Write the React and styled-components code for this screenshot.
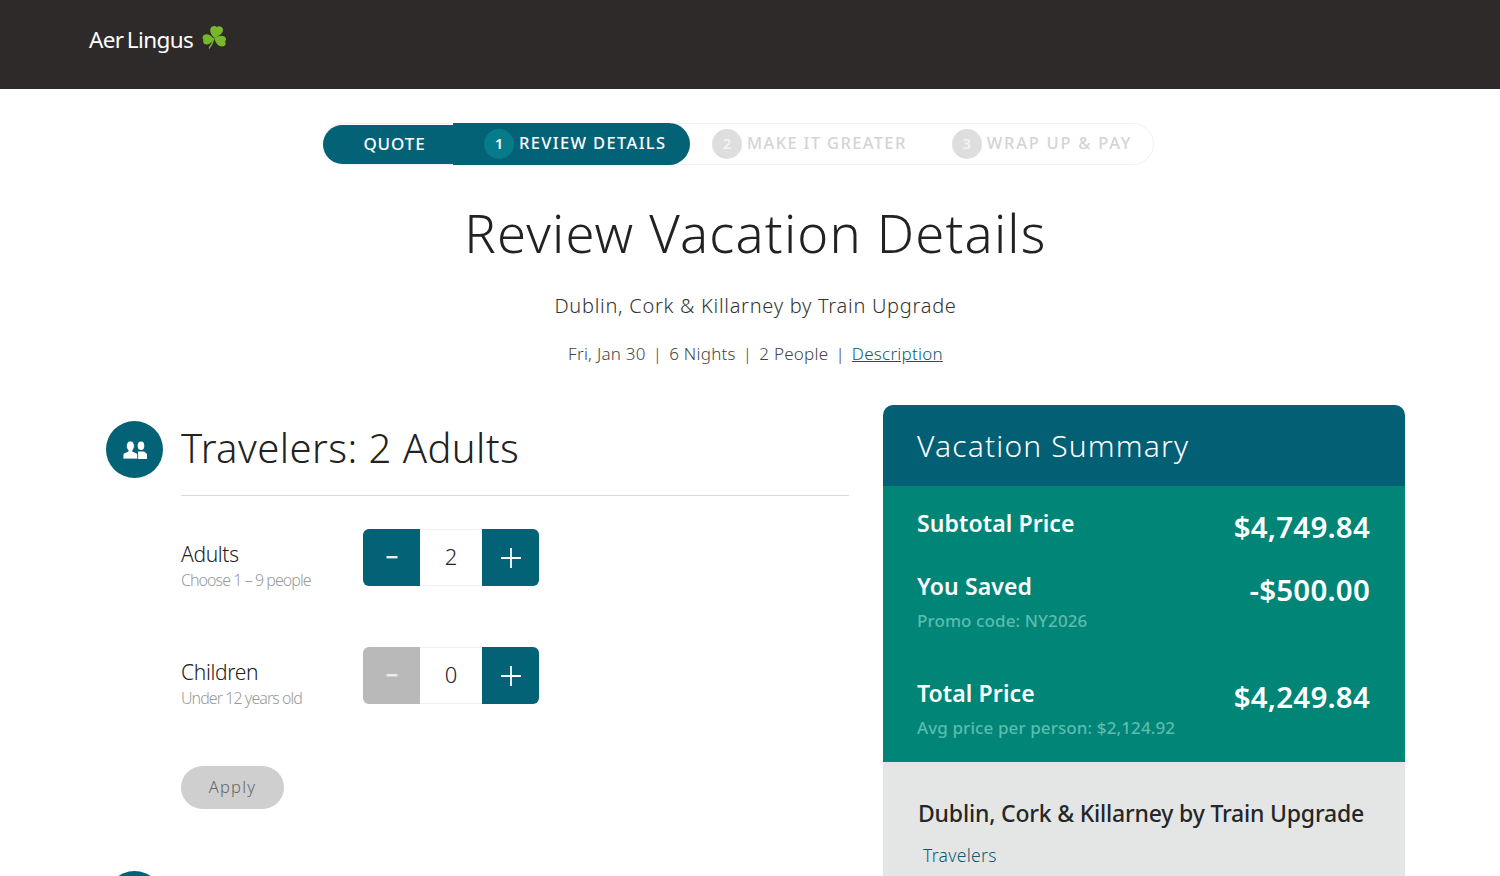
import React from "react";
import styled, { createGlobalStyle } from "styled-components";

const TEAL = "#036275";

const Global = createGlobalStyle`
  html, body { margin: 0; padding: 0; height: 876px; overflow: hidden; background: #fff; }
  body { font-family: "Noto Sans", "Open Sans", "Liberation Sans", sans-serif; color: #2b2b2b; }
  #root { height: 876px; overflow: hidden; }
  * { box-sizing: border-box; }
`;
const Header = styled.header`
  height: 89px; background: #2e2a2a; display: flex; align-items: flex-start; padding: 25px 0 0 89px; gap: 7px;
`;
const Brand = styled.span`
  color: #fff; font-size: 22.5px; line-height: 30px; font-weight: 400; letter-spacing: -0.6px; word-spacing: -2px;
`;
const StepperWrap = styled.nav`
  display: flex; padding: 34px 0 0 323px;
`;
const Stepper = styled.div`
  width: 831px; height: 42px; border: 1px solid #f1f1f1; border-radius: 21px; display: flex; align-items: center;
`;
const QuoteStep = styled.div`
  width: 130px; height: 39px; margin-left: -1px; background: ${TEAL}; color: #fff; border-radius: 20px 0 0 20px;
  display: flex; align-items: center; justify-content: center; font-size: 17px; font-weight: 500; letter-spacing: 0.9px; padding: 0 0 2px 13px;
`;
const ActiveStep = styled.div`
  width: 237px; height: 42px; background: ${TEAL}; color: #fff; border-radius: 0 21px 21px 0;
  display: flex; align-items: center; gap: 5px; padding-left: 31px; font-size: 16.5px; font-weight: 500; letter-spacing: 1.35px;
`;
const Step = styled.div`
  display: flex; align-items: center; gap: 5px; margin-left: ${p => p.$ml}px; color: #d4d4d4; font-size: 16.5px; font-weight: 500; letter-spacing: ${p => p.$ls}px;
`;
const StepLabel = styled.span`
  margin-top: -3px;
`;
const StepNum = styled.span`
  width: 30px; height: 30px; border-radius: 50%; flex: none; display: flex; align-items: center; justify-content: center; padding-bottom: 2px;
  background: ${p => p.$active ? "#057b8c" : "#dedede"}; color: ${p => p.$active ? "#fff" : "#f4f4f4"}; font-size: 15px; font-weight: 600; letter-spacing: 0;
`;
const Intro = styled.div`
  text-align: center; padding-left: 11px;
`;
const Title = styled.h1`
  margin: 0; padding-top: 33px; font-size: 52.5px; line-height: 70px; font-weight: 300; letter-spacing: 1.2px; color: #222;
`;
const Sub = styled.p`
  margin: 24px 0 0; font-size: 20px; line-height: 28px; font-weight: 300; letter-spacing: 0.72px; color: #333;
`;
const Meta = styled.p`
  margin: 22px 0 0; font-size: 17px; line-height: 24px; font-weight: 300; letter-spacing: 0.25px; color: #444;
  a { color: #0b5a70; text-decoration: underline; }
  i { font-style: normal; margin: 0 7px; }
`;
const Main = styled.main`
  display: grid; grid-template-columns: 743px 522px; column-gap: 34px; padding: 39px 0 0 106px;
`;
const Left = styled.section`
  padding-top: 16px;
`;
const SectionHead = styled.div`
  display: flex; align-items: center; gap: 18px; height: 57px;
`;
const Circle = styled.div`
  width: 57px; height: 57px; flex: none; border-radius: 50%; background: ${TEAL}; display: flex; align-items: center; justify-content: center;
`;
const SectionTitle = styled.h2`
  margin: 0 0 4px; font-size: 40px; line-height: 57px; font-weight: 300; letter-spacing: 0.45px; color: #222;
`;
const Body = styled.div`
  margin: 17px 0 0 75px; border-top: 1px solid #dcdcdc; padding-top: 33px; display: flex; flex-direction: column;
`;
const Row = styled.div`
  display: flex; align-items: center; height: 57px; margin-bottom: 61px;
`;
const RowText = styled.div`
  width: 182px; padding-top: 18px;
`;
const RowLabel = styled.div`
  font-size: 21px; line-height: 26px; font-weight: 300; letter-spacing: -0.35px; color: #222;
`;
const RowHint = styled.div`
  font-size: 16px; line-height: 26px; font-weight: 300; letter-spacing: -0.95px; color: #999;
`;
const Counter = styled.div`
  display: flex; width: 176px; height: 57px; border-radius: 6px; overflow: hidden;
`;
const CounterBtn = styled.button`
  width: 57px; height: 57px; border: 0; padding: 0; background: ${p => p.$off ? "#b9b9b9" : TEAL}; color: #fff;
  display: flex; align-items: center; justify-content: center;
`;
const CounterValue = styled.div`
  flex: 1; border-top: 1px solid #f1f1f1; border-bottom: 1px solid #f1f1f1; display: flex; align-items: center; justify-content: center;
  font-size: 22px; font-weight: 300; color: #222; padding-bottom: 3px;
`;
const Apply = styled.button`
  width: 103px; height: 43px; margin-top: 1px; border: 0; border-radius: 22px; background: #cfcfcf; color: #666;
  font: 300 16.5px "Noto Sans", sans-serif; letter-spacing: 1.2px; padding: 0 0 2px;
`;
const NextCircle = styled(Circle)`
  margin: 62px 0 0;
`;
const Summary = styled.aside``;
const SummaryHead = styled.div`
  height: 81px; background: #025f74; border-radius: 10px 10px 0 0; padding: 0 34px 1px; display: flex; align-items: center;
  color: #fff; font-size: 30px; font-weight: 300; letter-spacing: 1.15px;
`;
const Prices = styled.div`
  height: 276px; background: #008577; padding: 23px 35px 0 34px; color: #fff; display: flex; flex-direction: column;
`;
const PriceRow = styled.div`
  display: flex; justify-content: space-between; align-items: flex-start; height: ${p => p.$h}px;
`;
const PriceLabel = styled.div`
  font-size: 23px; line-height: 28px; font-weight: 600; letter-spacing: 0.1px;
`;
const PriceNote = styled.div`
  margin-top: 9px; font-size: 17px; line-height: 24px; font-weight: 500; letter-spacing: 0.1px; color: #5cbcae;
`;
const PriceValue = styled.div`
  font-size: 29.5px; line-height: 36px; font-weight: 600; letter-spacing: 0.2px;
`;
const Package = styled.div`
  height: 114px; background: #e4e6e6; padding: 36px 35px 0;
`;
const PackageTitle = styled.div`
  font-size: 23px; line-height: 30px; font-weight: 500; letter-spacing: -0.2px; color: #262626; white-space: nowrap;
`;
const PackageLink = styled.div`
  margin: 15px 0 0 5px; font-size: 17.5px; line-height: 24px; font-weight: 300; letter-spacing: 0.3px; color: #0c5a70;
`;

const Shamrock = () => (
  <svg width="27" height="27" viewBox="0 0 27 27" aria-hidden="true">
    <g fill="#76b82a">
      <path d="M14.500 13C10 9 9.500 5 11 2.500C12.500 .5 15.500 .5 16.500 2C18.500 .5 22.500 1 23 4.500C23.500 8 19 11 14.500 13Z" />
      <path d="M13.500 13.500C10 9 6 8.500 4 10C2 11.500 2.500 14 3.500 14.800C2.500 16.500 3.500 19.500 6.500 19.500C9.500 19.500 12.500 17 13.500 13.500Z" />
      <path d="M14.500 13.500C17 10.500 22 10 24.500 11.500C26.500 13 26.500 15.500 25 16.500C26.500 18.500 25.500 21.500 22 21.500C18.500 21.500 15.500 18 14.500 13.500Z" />
    </g>
    <path d="M14 13C13 17 11.500 20.500 9 23.500" stroke="#76b82a" strokeWidth="1.300" fill="none" />
  </svg>
);
const People = () => (
  <svg width="24" height="18" viewBox="0 0 24 18" fill="#fff" aria-hidden="true">
    <ellipse cx="18" cy="4.800" rx="3.300" ry="4.300" />
    <path d="M15 10.500h6l3 2.500V18h-9z" />
    <path d="M3.400 5c0-2.900 1.600-5 4-5s4 2.100 4 5c0 1.700-.7 3.200-1.700 4.200v1.200c2.500.8 5 1.700 5 3.600v4H0v-4c0-1.900 2.600-2.800 5.100-3.600V9.200C4.100 8.200 3.400 6.700 3.400 5z" stroke={TEAL} strokeWidth=".8" />
  </svg>
);
const Minus = () => <svg width="12" height="3" viewBox="0 0 12 3"><rect width="11" height="2.400" x=".5" fill="#e8eef0" /></svg>;
const Plus = () => <svg width="20" height="20" viewBox="0 0 20 20"><path d="M10 0v20M0 10h20" stroke="#fff" strokeWidth="1.800" /></svg>;

const CounterRow = ({ label, hint, value, off }) => (
  <Row>
    <RowText><RowLabel>{label}</RowLabel><RowHint>{hint}</RowHint></RowText>
    <Counter>
      <CounterBtn $off={off} aria-label="Decrease"><Minus /></CounterBtn>
      <CounterValue>{value}</CounterValue>
      <CounterBtn aria-label="Increase"><Plus /></CounterBtn>
    </Counter>
  </Row>
);

export default function App() {
  return (
    <>
      <Global />
      <Header><Brand>Aer Lingus</Brand><Shamrock /></Header>
      <StepperWrap>
        <Stepper>
          <QuoteStep>QUOTE</QuoteStep>
          <ActiveStep><StepNum $active>1</StepNum><StepLabel>REVIEW DETAILS</StepLabel></ActiveStep>
          <Step $ml={22} $ls={1.35}><StepNum>2</StepNum><StepLabel>MAKE IT GREATER</StepLabel></Step>
          <Step $ml={45} $ls={1.75}><StepNum>3</StepNum><StepLabel>WRAP UP &amp; PAY</StepLabel></Step>
        </Stepper>
      </StepperWrap>
      <Intro>
        <Title>Review Vacation Details</Title>
        <Sub>Dublin, Cork &amp; Killarney by Train Upgrade</Sub>
        <Meta>Fri, Jan 30<i>|</i>6 Nights<i>|</i>2 People<i>|</i><a href="#d">Description</a></Meta>
      </Intro>
      <Main>
        <Left>
          <SectionHead><Circle><People /></Circle><SectionTitle>Travelers: 2 Adults</SectionTitle></SectionHead>
          <Body>
            <CounterRow label="Adults" hint="Choose 1 – 9 people" value="2" />
            <CounterRow label="Children" hint="Under 12 years old" value="0" off />
            <Apply>Apply</Apply>
          </Body>
          <NextCircle />
        </Left>
        <Summary>
          <SummaryHead>Vacation Summary</SummaryHead>
          <Prices>
            <PriceRow $h={63}><PriceLabel>Subtotal Price</PriceLabel><PriceValue>$4,749.84</PriceValue></PriceRow>
            <PriceRow $h={107}><div><PriceLabel>You Saved</PriceLabel><PriceNote>Promo code: NY2026</PriceNote></div><PriceValue>-$500.00</PriceValue></PriceRow>
            <PriceRow $h={70}><div><PriceLabel>Total Price</PriceLabel><PriceNote>Avg price per person: $2,124.92</PriceNote></div><PriceValue>$4,249.84</PriceValue></PriceRow>
          </Prices>
          <Package>
            <PackageTitle>Dublin, Cork &amp; Killarney by Train Upgrade</PackageTitle>
            <PackageLink>Travelers</PackageLink>
          </Package>
        </Summary>
      </Main>
    </>
  );
}
